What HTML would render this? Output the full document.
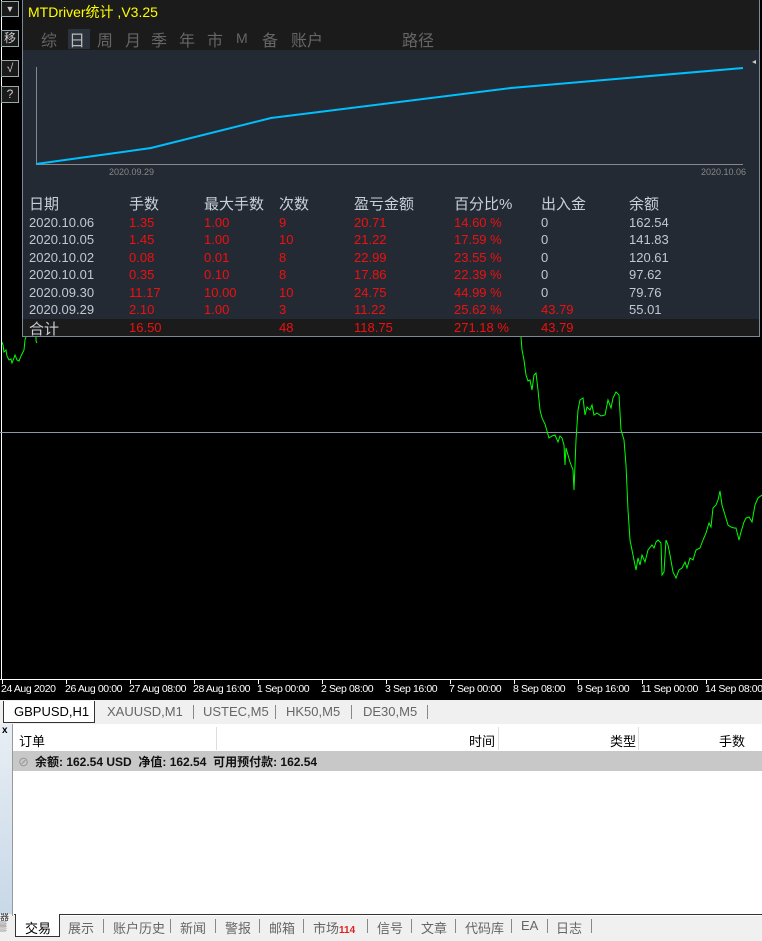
<!DOCTYPE html>
<html><head><meta charset="utf-8"><style>
*{margin:0;padding:0;box-sizing:border-box}
body{width:762px;height:941px;overflow:hidden;background:#000;position:relative;font-family:"Liberation Sans","Noto Sans CJK SC",sans-serif}
.a{position:absolute}
.btn{position:absolute;left:1px;width:18px;height:17px;border:1px solid #9aa;background:#1a1a1a;color:#ccc;font-size:12px;text-align:center;line-height:15px}
.panel{position:absolute;left:22px;top:0;width:738px;height:337px;background:#232a33;border:1px solid #7a8898;border-top:none}
.hd{position:absolute;left:0;top:0;width:100%;height:50px;background:#1b1b1b}
.tab{position:absolute;top:27px;font-size:16px;color:#666}
.t{position:absolute;font-size:13px;color:#c0c8d0;white-space:nowrap}
.r{color:#f01010}
.h{font-size:15px;color:#c8d0d8}
.ax{position:absolute;top:683px;font-size:10.5px;color:#fff;white-space:nowrap;font-family:"Liberation Sans",sans-serif;letter-spacing:-0.4px}
.ct{position:absolute;top:704px;font-size:13px;color:#666}
.bt{position:absolute;top:918px;font-size:13px;color:#666}
.sep{position:absolute;width:1px;background:#888}
</style></head><body>
<svg class="a" style="left:0;top:0" width="762" height="700">
<line x1="1.5" y1="0" x2="1.5" y2="680" stroke="#fff" stroke-width="1"/>
<line x1="22.5" y1="0" x2="22.5" y2="337" stroke="#8090a0" stroke-width="1"/>
<line x1="0" y1="432.5" x2="762" y2="432.5" stroke="#8a9aaa" stroke-width="1"/>
<polyline fill="none" stroke="#00ff00" stroke-width="1" points="2,342 3,345 4,352 6,350 7,356 9,360 11,359 12,363 14,358 15,355 17,360 19,361 21,356 23,352 24,350 25,340 26,337"/>
<polyline fill="none" stroke="#00ff00" stroke-width="1" points="36,337 36,341 37,343"/>
<polyline fill="none" stroke="#00ff00" stroke-width="1" points="521,337 522,350 524,360 526,375 528,381 530,380 532,390 534,375 536,373 538,390 540,410 542,418 545,424 547,431 549,438 552,436 555,435 558,442 560,436 562,438 564,445 565,465 566,448 568,455 570,462 573,470 574,490 576,440 578,410 580,400 583,398 585,415 587,407 590,410 592,405 594,415 597,413 601,416 605,415 608,400 611,408 613,398 616,392 619,395 621,430 624,440 626,465 628,510 630,540 633,555 636,570 638,558 640,565 642,555 645,562 648,550 652,545 654,548 656,542 658,540 661,543 662,575 664,572 666,540 668,545 670,555 673,572 676,578 679,570 682,568 685,562 687,568 690,558 693,560 696,550 700,548 703,540 706,533 709,523 711,527 713,508 716,505 718,500 720,491 722,505 725,515 728,525 731,527 734,528 736,528 739,540 741,532 744,522 746,518 749,517 752,522 755,505 758,498 762,495"/>
<line x1="0" y1="679.5" x2="762" y2="679.5" stroke="#fff"/>
<g stroke="#fff"><line x1="2.5" y1="680" x2="2.5" y2="684"/><line x1="66.5" y1="680" x2="66.5" y2="684"/><line x1="130.5" y1="680" x2="130.5" y2="684"/><line x1="194.5" y1="680" x2="194.5" y2="684"/><line x1="258.5" y1="680" x2="258.5" y2="684"/><line x1="322.5" y1="680" x2="322.5" y2="684"/><line x1="386.5" y1="680" x2="386.5" y2="684"/><line x1="450.5" y1="680" x2="450.5" y2="684"/><line x1="514.5" y1="680" x2="514.5" y2="684"/><line x1="578.5" y1="680" x2="578.5" y2="684"/><line x1="642.5" y1="680" x2="642.5" y2="684"/><line x1="706.5" y1="680" x2="706.5" y2="684"/></g>
</svg>
<div class="btn" style="top:1px;height:16px;font-size:9px;line-height:14px">▼</div>
<div class="btn" style="top:30px">移</div>
<div class="btn" style="top:60px">√</div>
<div class="btn" style="top:86px">?</div>

<div class="panel">
<div class="hd"></div>
<div class="a" style="left:5px;top:2px;font-size:14px;color:#ffff00">MTDriver统计 ,V3.25</div>
<div class="a" style="left:45px;top:29px;width:22px;height:20px;background:#2a323c"></div>
<div class="tab" style="left:18px">综</div>
<div class="tab" style="left:46px;color:#bbb">日</div>
<div class="tab" style="left:74px">周</div>
<div class="tab" style="left:102px">月</div>
<div class="tab" style="left:128px">季</div>
<div class="tab" style="left:156px">年</div>
<div class="tab" style="left:184px">市</div>
<div class="tab" style="left:213px;font-size:14px;top:30px">M</div>
<div class="tab" style="left:239px">备</div>
<div class="tab" style="left:268px">账户</div>
<div class="tab" style="left:379px">路径</div>
<svg class="a" style="left:0;top:50px" width="738" height="130">
<line x1="13.5" y1="17" x2="13.5" y2="115" stroke="#888"/>
<line x1="13" y1="114.5" x2="720" y2="114.5" stroke="#888"/>
<polyline fill="none" stroke="#00bfff" stroke-width="2" points="13,114 128,98 248,68 488,38 720,18"/>
<polygon points="733,10 729,12 733,14" fill="#ccc"/>
<text x="86" y="125" font-size="9" fill="#888" font-family="Liberation Sans">2020.09.29</text>
<text x="678" y="125" font-size="9" fill="#888" font-family="Liberation Sans">2020.10.06</text>
</svg>
<div class="t h" style="left:6px;top:193px">日期</div>
<div class="t h" style="left:106px;top:193px">手数</div>
<div class="t h" style="left:181px;top:193px">最大手数</div>
<div class="t h" style="left:256px;top:193px">次数</div>
<div class="t h" style="left:331px;top:193px">盈亏金额</div>
<div class="t h" style="left:431px;top:193px">百分比%</div>
<div class="t h" style="left:518px;top:193px">出入金</div>
<div class="t h" style="left:606px;top:193px">余额</div>

<div class="t" style="left:6px;top:215px">2020.10.06</div><div class="t r" style="left:106px;top:215px">1.35</div><div class="t r" style="left:181px;top:215px">1.00</div><div class="t r" style="left:256px;top:215px">9</div><div class="t r" style="left:331px;top:215px">20.71</div><div class="t r" style="left:431px;top:215px">14.60 %</div><div class="t" style="left:518px;top:215px">0</div><div class="t" style="left:606px;top:215px">162.54</div>
<div class="t" style="left:6px;top:232px">2020.10.05</div><div class="t r" style="left:106px;top:232px">1.45</div><div class="t r" style="left:181px;top:232px">1.00</div><div class="t r" style="left:256px;top:232px">10</div><div class="t r" style="left:331px;top:232px">21.22</div><div class="t r" style="left:431px;top:232px">17.59 %</div><div class="t" style="left:518px;top:232px">0</div><div class="t" style="left:606px;top:232px">141.83</div>
<div class="t" style="left:6px;top:250px">2020.10.02</div><div class="t r" style="left:106px;top:250px">0.08</div><div class="t r" style="left:181px;top:250px">0.01</div><div class="t r" style="left:256px;top:250px">8</div><div class="t r" style="left:331px;top:250px">22.99</div><div class="t r" style="left:431px;top:250px">23.55 %</div><div class="t" style="left:518px;top:250px">0</div><div class="t" style="left:606px;top:250px">120.61</div>
<div class="t" style="left:6px;top:267px">2020.10.01</div><div class="t r" style="left:106px;top:267px">0.35</div><div class="t r" style="left:181px;top:267px">0.10</div><div class="t r" style="left:256px;top:267px">8</div><div class="t r" style="left:331px;top:267px">17.86</div><div class="t r" style="left:431px;top:267px">22.39 %</div><div class="t" style="left:518px;top:267px">0</div><div class="t" style="left:606px;top:267px">97.62</div>
<div class="t" style="left:6px;top:285px">2020.09.30</div><div class="t r" style="left:106px;top:285px">11.17</div><div class="t r" style="left:181px;top:285px">10.00</div><div class="t r" style="left:256px;top:285px">10</div><div class="t r" style="left:331px;top:285px">24.75</div><div class="t r" style="left:431px;top:285px">44.99 %</div><div class="t" style="left:518px;top:285px">0</div><div class="t" style="left:606px;top:285px">79.76</div>
<div class="t" style="left:6px;top:302px">2020.09.29</div><div class="t r" style="left:106px;top:302px">2.10</div><div class="t r" style="left:181px;top:302px">1.00</div><div class="t r" style="left:256px;top:302px">3</div><div class="t r" style="left:331px;top:302px">11.22</div><div class="t r" style="left:431px;top:302px">25.62 %</div><div class="t r" style="left:518px;top:302px">43.79</div><div class="t" style="left:606px;top:302px">55.01</div>
<div class="a" style="left:0;top:319px;width:100%;height:17px;background:#1b1b1b"></div>
<div class="t h" style="left:6px;top:318px">合计</div><div class="t r" style="left:106px;top:320px">16.50</div><div class="t r" style="left:256px;top:320px">48</div><div class="t r" style="left:331px;top:320px">118.75</div><div class="t r" style="left:431px;top:320px">271.18 %</div><div class="t r" style="left:518px;top:320px">43.79</div>
</div>

<div class="ax" style="left:1px">24 Aug 2020</div>
<div class="ax" style="left:65px">26 Aug 00:00</div>
<div class="ax" style="left:129px">27 Aug 08:00</div>
<div class="ax" style="left:193px">28 Aug 16:00</div>
<div class="ax" style="left:257px">1 Sep 00:00</div>
<div class="ax" style="left:321px">2 Sep 08:00</div>
<div class="ax" style="left:385px">3 Sep 16:00</div>
<div class="ax" style="left:449px">7 Sep 00:00</div>
<div class="ax" style="left:513px">8 Sep 08:00</div>
<div class="ax" style="left:577px">9 Sep 16:00</div>
<div class="ax" style="left:641px">11 Sep 00:00</div>
<div class="ax" style="left:705px">14 Sep 08:00</div>

<div class="a" style="left:0;top:700px;width:762px;height:241px;background:#f0f0f0"></div>
<div class="a" style="left:3px;top:701px;width:92px;height:22px;background:#fff;border:1px solid #333;border-top:none"></div>
<div class="ct" style="left:14px;color:#000">GBPUSD,H1</div>
<div class="ct" style="left:107px">XAUUSD,M1</div><div class="sep" style="left:193px;top:705px;height:14px"></div>
<div class="ct" style="left:203px">USTEC,M5</div><div class="sep" style="left:275px;top:705px;height:14px"></div>
<div class="ct" style="left:286px">HK50,M5</div><div class="sep" style="left:351px;top:705px;height:14px"></div>
<div class="ct" style="left:363px">DE30,M5</div><div class="sep" style="left:427px;top:705px;height:14px"></div>

<div class="a" style="left:0;top:724px;width:12px;height:190px;background:linear-gradient(#e8eef4,#c8d8e8)"></div>
<div class="a" style="left:2px;top:725px;font-size:10px;font-weight:bold">x</div>
<div class="a" style="left:12px;top:724px;width:750px;height:192px;background:#fff;border-left:1px solid #999"></div>
<div class="a" style="left:216px;top:727px;width:1px;height:23px;background:#ddd"></div>
<div class="a" style="left:498px;top:727px;width:1px;height:23px;background:#ddd"></div>
<div class="a" style="left:638px;top:727px;width:1px;height:23px;background:#ddd"></div>
<div class="a" style="left:19px;top:731px;font-size:13px">订单</div>
<div class="a" style="left:469px;top:731px;font-size:13px">时间</div>
<div class="a" style="left:610px;top:731px;font-size:13px">类型</div>
<div class="a" style="left:719px;top:731px;font-size:13px">手数</div>
<div class="a" style="left:13px;top:751px;width:749px;height:20px;background:#c8c8c8"></div>
<div class="a" style="left:18px;top:754px;font-size:11px;color:#888">⊘</div>
<div class="a" style="left:35px;top:753px;font-size:12px;font-weight:bold;color:#111">余额: 162.54 USD&nbsp; 净值: 162.54&nbsp; 可用预付款: 162.54</div>

<div class="a" style="left:0;top:913px;width:14px;height:28px;font-size:9px;line-height:9px;color:#333;overflow:hidden">器<br>▒</div>
<div class="a" style="left:14px;top:914px;width:748px;height:1px;background:#333"></div>
<div class="a" style="left:15px;top:914px;width:45px;height:23px;background:#fff;border:1px solid #333;border-top:none"></div>
<div class="bt" style="left:25px;color:#000">交易</div>
<div class="bt" style="left:68px">展示</div><div class="sep" style="left:103px;top:919px;height:14px"></div>
<div class="bt" style="left:113px">账户历史</div><div class="sep" style="left:170px;top:919px;height:14px"></div>
<div class="bt" style="left:180px">新闻</div><div class="sep" style="left:215px;top:919px;height:14px"></div>
<div class="bt" style="left:225px">警报</div><div class="sep" style="left:259px;top:919px;height:14px"></div>
<div class="bt" style="left:269px">邮箱</div><div class="sep" style="left:303px;top:919px;height:14px"></div>
<div class="bt" style="left:313px">市场</div><div class="a" style="left:339px;top:925px;font-size:10px;font-weight:bold;color:#e02020">114</div><div class="sep" style="left:367px;top:919px;height:14px"></div>
<div class="bt" style="left:377px">信号</div><div class="sep" style="left:411px;top:919px;height:14px"></div>
<div class="bt" style="left:421px">文章</div><div class="sep" style="left:455px;top:919px;height:14px"></div>
<div class="bt" style="left:465px">代码库</div><div class="sep" style="left:511px;top:919px;height:14px"></div>
<div class="bt" style="left:521px">EA</div><div class="sep" style="left:547px;top:919px;height:14px"></div>
<div class="bt" style="left:556px">日志</div><div class="sep" style="left:591px;top:919px;height:14px"></div>
</body></html>
